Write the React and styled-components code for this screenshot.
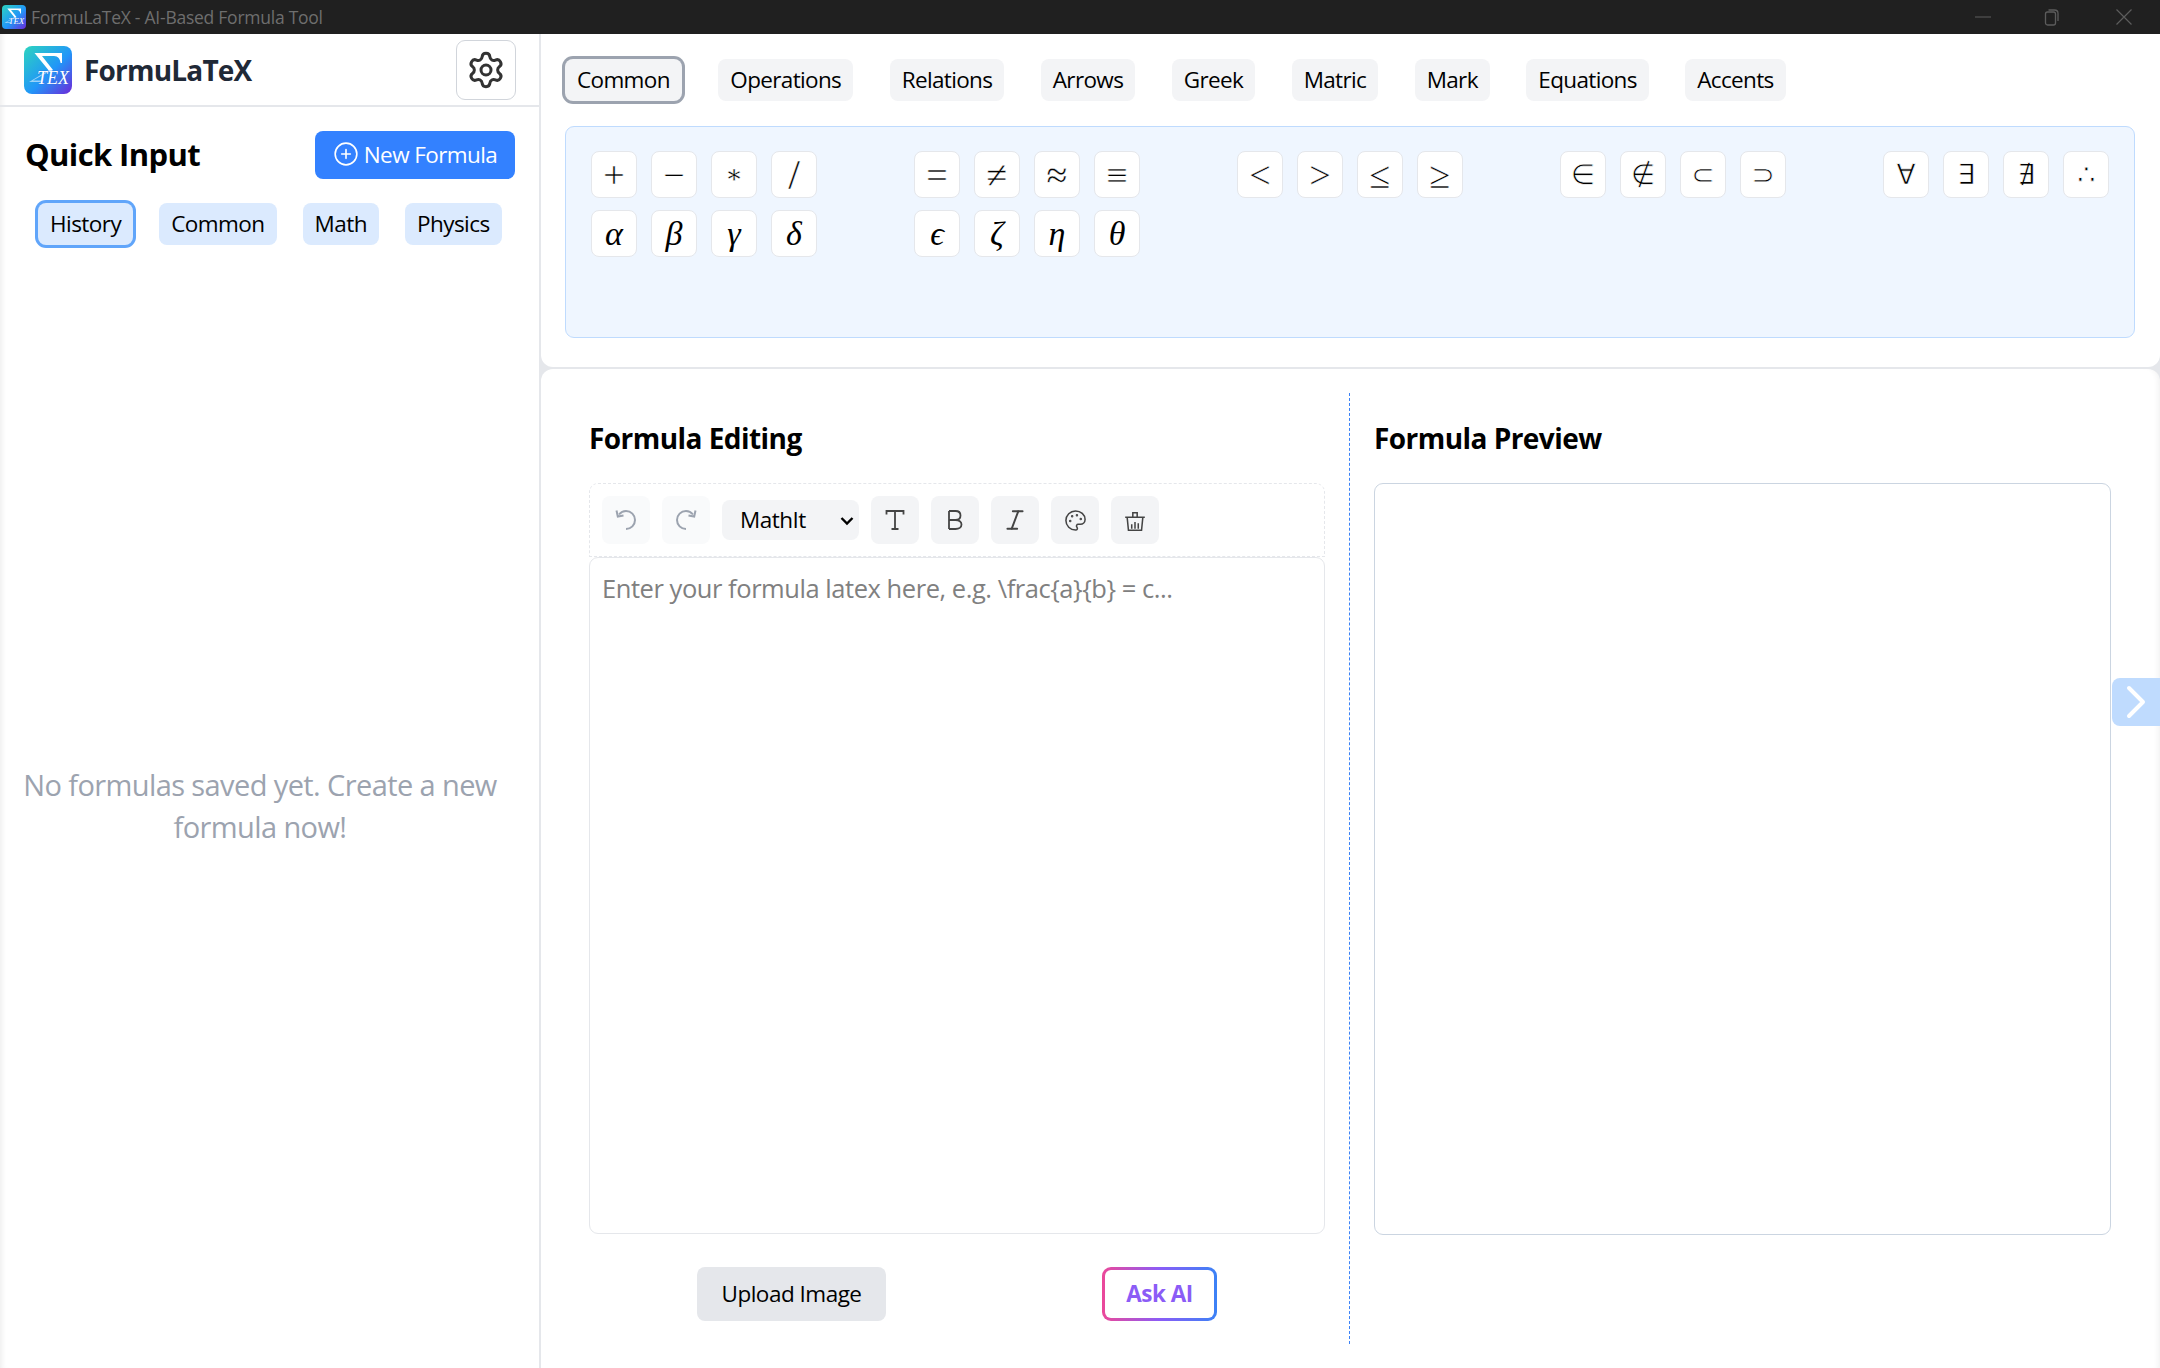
import styled, { createGlobalStyle } from "styled-components";
import { PlusCircle, Settings, Palette, Italic } from "lucide-react";

const GlobalStyle = createGlobalStyle`
  html, body {
    margin: 0;
    padding: 0;
    height: 100%;
    overflow: hidden;
    background: #fff;
    font-family: "Open Sans", "Noto Sans", sans-serif;
  }
  * { box-sizing: border-box; }
`;

const Page = styled.div`
  position: relative;
  width: 2160px;
  height: 1368px;
  display: flex;
  flex-direction: column;
  overflow: hidden;
`;

const TitleBar = styled.div`
  height: 34px;
  flex: none;
  background: #202020;
  display: flex;
  align-items: center;
  padding-left: 2px;
  color: #6e6e6e;
  font-size: 17.5px;
  letter-spacing: -0.25px;
`;
const TitleText = styled.span`
  margin-left: 5px;
  flex: 1;
`;
const WinButton = styled.span`
  width: 72px;
  height: 34px;
  display: flex;
  align-items: center;
  justify-content: center;
  padding-left: ${(p) => p.$nudge || 0}px;
  color: #5c5c5c;
`;

const Body = styled.div`
  flex: 1;
  display: flex;
  min-height: 0;
`;

const Sidebar = styled.aside`
  width: 541px;
  flex: none;
  display: flex;
  flex-direction: column;
  border-right: 2px solid #e5e7eb;
  box-shadow: inset 6px 0 6px -5px rgba(0, 0, 0, 0.09);
`;
const BrandBar = styled.div`
  height: 73px;
  flex: none;
  display: flex;
  align-items: center;
  padding: 0 23px 0 24px;
  border-bottom: 2px solid #e5e7eb;
`;
const BrandName = styled.span`
  margin-left: 12px;
  flex: 1;
  font-size: 28px;
  font-weight: 700;
  letter-spacing: -0.8px;
  color: #1f2937;
`;
const SettingsButton = styled.button`
  width: 60px;
  height: 60px;
  background: #fff;
  border: 1.5px solid #d1d5db;
  border-radius: 9px;
  color: #333;
  display: flex;
  align-items: center;
  justify-content: center;
  padding: 0;
`;

const SidebarPanel = styled.div`
  flex: 1;
  display: flex;
  flex-direction: column;
  padding: 24px 24px 0 25px;
`;
const QuickHead = styled.div`
  display: flex;
  align-items: center;
  justify-content: space-between;
`;
const QuickTitle = styled.h2`
  margin: 0;
  padding-bottom: 2px;
  font-size: 31px;
  font-weight: 700;
  letter-spacing: -0.6px;
  color: #000;
`;
const NewButton = styled.button`
  width: 200px;
  height: 48px;
  border: 0;
  border-radius: 8px;
  background: #3381ff;
  color: #fff;
  font: inherit;
  font-size: 22.5px;
  letter-spacing: -0.6px;
  display: flex;
  align-items: center;
  justify-content: center;
  gap: 5px;
  padding: 0 0 2px;
`;
const SideTabs = styled.div`
  display: flex;
  align-items: center;
  margin: 24px 0 0 13px;
  gap: 26px;
`;
const SideTab = styled.button`
  height: 42px;
  padding: 0 12px 2px;
  border: 0;
  border-radius: 8px;
  background: #dbeafe;
  color: #000;
  font: inherit;
  font-size: 22.5px;
  letter-spacing: -0.55px;
  box-shadow: ${(p) => (p.$active ? "0 0 0 3px #60a5fa" : "none")};
`;
const EmptyNote = styled.p`
  margin: 0 0 0 -20px;
  flex: 1;
  display: flex;
  align-items: center;
  justify-content: center;
  text-align: center;
  font-size: 29px;
  line-height: 42px;
  letter-spacing: -0.6px;
  color: #9ca3af;
  padding: 0 0 2px;
`;

const Main = styled.main`
  flex: 1;
  min-width: 0;
  display: flex;
  flex-direction: column;
  background: #e5e7eb;
  gap: 2px;
`;

const TopPanel = styled.section`
  height: 333px;
  flex: none;
  background: #fff;
  border-radius: 0 0 12px 12px;
  padding: 25px 25px 0 24px;
`;
const CategoryTabs = styled.div`
  display: flex;
  align-items: center;
  height: 42px;
  gap: 36.5px;
`;
const CategoryTab = styled.button`
  height: 42px;
  padding: 0 12px 2px;
  border: 0;
  border-radius: 8px;
  background: #f3f4f6;
  color: #000;
  font: inherit;
  font-size: 22.5px;
  letter-spacing: -0.65px;
  box-shadow: ${(p) => (p.$active ? "0 0 0 3px #9ca3af" : "none")};
`;
const SymbolPanel = styled.div`
  height: 212px;
  margin-top: 25px;
  background: #eff6ff;
  border: 1.5px solid #bfdbfe;
  border-radius: 9px;
  padding: 24px 25px;
  display: grid;
  grid-template-columns: repeat(5, 226px);
  justify-content: space-between;
  align-content: start;
  row-gap: 12px;
`;
const SymbolGroup = styled.div`
  display: grid;
  grid-template-columns: repeat(4, 46px);
  column-gap: 14px;
`;
// the white stroke eats into the glyph, the reference's math font is much lighter
const SymbolButton = styled.button`
  height: 47px;
  padding: 0;
  background: #fff;
  border: 1px solid #e5e7eb;
  border-radius: 8px;
  color: #000;
  font-family: ${(p) =>
    p.$thin ? '"DejaVu Sans", sans-serif' : '"Liberation Serif", "DejaVu Serif", serif'};
  font-size: ${(p) => p.$size || (p.$thin ? 28 : p.$italic ? 34 : 38)}px;
  font-style: ${(p) => (p.$italic ? "italic" : "normal")};
  -webkit-text-stroke: ${(p) => (p.$thin ? 0.7 : p.$italic ? 0 : 0.35)}px #fff;
  line-height: 1;
  display: flex;
  align-items: center;
  justify-content: center;
`;

const BottomPanel = styled.section`
  flex: 1;
  min-height: 0;
  background: #fff;
  border-radius: 12px 12px 0 0;
  padding: 24px 0 24px 46px;
  display: grid;
  grid-template-columns: 763px 1fr;
  box-shadow: inset -6px 0 6px -5px rgba(0, 0, 0, 0.07);
`;
const EditorColumn = styled.div`
  display: flex;
  flex-direction: column;
  padding: 24px 24px 0 2px;
  border-right: 1px dashed #3b82f6;
`;
const PreviewColumn = styled.div`
  display: flex;
  flex-direction: column;
  padding: 24px 49px 0 24px;
`;
const SectionTitle = styled.h3`
  margin: 0 0 24px;
  height: 42px;
  line-height: 42px;
  font-size: 28px;
  font-weight: 700;
  letter-spacing: -0.55px;
  color: #000;
`;
const Toolbar = styled.div`
  height: 74px;
  flex: none;
  border: 1.5px dashed #e5e7eb;
  border-radius: 9px 9px 0 0;
  display: flex;
  align-items: center;
  gap: 12px;
  padding: 0 12px;
`;
const ToolButton = styled.button`
  width: 48px;
  height: 48px;
  padding: 0;
  border: 0;
  border-radius: 8px;
  background: ${(p) => (p.$disabled ? "#f9fafb" : "#f3f4f6")};
  color: ${(p) => (p.$disabled ? "#9ca3af" : "#444")};
  display: flex;
  align-items: center;
  justify-content: center;
`;
const FontSelect = styled.select`
  appearance: none;
  width: 137px;
  height: 40px;
  border: 0;
  border-radius: 8px;
  background-color: #f3f4f6;
  background-image: url("data:image/svg+xml,%3Csvg xmlns='http://www.w3.org/2000/svg' width='14' height='10' viewBox='0 0 14 10' fill='none' stroke='%23000' stroke-width='2.4'%3E%3Cpath d='M1.500 2l5.500 5.500L12.500 2'/%3E%3C/svg%3E");
  background-repeat: no-repeat;
  background-position: 118px 16px;
  color: #000;
  font: inherit;
  font-size: 22.5px;
  letter-spacing: -0.5px;
  padding: 0 8px 2px 18px;
`;
const FormulaInput = styled.textarea`
  width: 100%;
  height: 677px;
  flex: none;
  resize: none;
  border: 1.5px solid #e5e7eb;
  border-radius: 9px;
  padding: 12px;
  outline: none;
  font: inherit;
  font-size: 25.5px;
  letter-spacing: -0.45px;
  line-height: 36px;
  overflow: hidden;
  &::placeholder { color: #808080; }
`;
const ActionRow = styled.div`
  display: flex;
  align-items: center;
  margin-top: 33px;
  padding-left: 108px;
  gap: 216px;
`;
const UploadButton = styled.button`
  width: 189px;
  height: 54px;
  border: 0;
  border-radius: 8px;
  background: #e5e7eb;
  color: #000;
  font: inherit;
  font-size: 22.5px;
  letter-spacing: -0.5px;
  padding: 0 0 2px;
`;
const AskButton = styled.button`
  width: 115px;
  height: 54px;
  border: 3px solid transparent;
  border-radius: 9px;
  background: linear-gradient(#fff, #fff) padding-box,
    linear-gradient(90deg, #ec4899, #8b5cf6, #3b82f6) border-box;
  color: #8b5cf6;
  font: inherit;
  font-size: 22.5px;
  font-weight: 700;
  letter-spacing: -0.5px;
  padding: 0 0 2px;
`;
const PreviewBox = styled.div`
  height: 752px;
  flex: none;
  border: 1.5px solid #cbd5e1;
  border-radius: 9px;
`;
const ExpandTab = styled.button`
  position: absolute;
  right: 0;
  top: 678px;
  width: 48px;
  height: 48px;
  padding: 0;
  border: 0;
  border-radius: 8px 0 0 8px;
  background: #bfdbfe;
  display: flex;
  align-items: center;
  justify-content: center;
`;

const Logo = ({ size, id }) => (
  <svg width={size} height={size} viewBox="0 0 48 48" style={{ flex: "none" }}>
    <defs>
      <linearGradient id={id} x1="0" y1="0" x2="1" y2="1">
        <stop offset="0" stopColor="#2dd4bf" />
        <stop offset="0.55" stopColor="#2196f8" />
        <stop offset="1" stopColor="#6d28d9" />
      </linearGradient>
    </defs>
    <rect width="48" height="48" rx="8" fill={`url(#${id})`} />
    <path d="M10.500 7H38v10h-1.400c-.6-4-2.400-7-6.600-7H18l11 14-3 2z" fill="#fff" />
    <path d="M25 24 5 36h13v-1.500H9l17-9.500z" fill="#fff" opacity="0.55" />
    <text
      x="13"
      y="38"
      fill="#fff"
      fontFamily="'Liberation Serif', serif"
      fontStyle="italic"
      fontSize="18"
      stroke="#2a6fe0"
      strokeWidth="0.5"
      paintOrder="stroke"
    >
      TEX
    </text>
  </svg>
);

const UndoIcon = ({ flip }) => (
  <svg
    width="26"
    height="26"
    viewBox="0 0 26 26"
    fill="none"
    stroke="currentColor"
    strokeWidth="2"
    style={flip ? { transform: "scaleX(-1)" } : undefined}
  >
    <path d="M6 7.500C8 5 10.500 4 13 4c5 0 9 4 9 9s-4 9-9 9" />
    <path d="M3.500 3.500 4.800 9.500 10.500 8.500" strokeLinejoin="miter" />
  </svg>
);

const SerifT = () => (
  <svg width="26" height="26" viewBox="0 0 26 26" fill="none" stroke="currentColor" strokeWidth="1.800">
    <path d="M4.500 7.500V4h17v3.500M13 4v18M9.500 22h7" />
  </svg>
);

const ThinB = () => (
  <svg width="26" height="26" viewBox="0 0 26 26" fill="none" stroke="currentColor" strokeWidth="1.800">
    <path d="M7 4v18M7 4h6.500c3 0 5 1.800 5 4.500S16.500 13 13.500 13H7M13.500 13c3.500 0 6 1.800 6 4.500S17 22 13.500 22H7" />
  </svg>
);

const BasketIcon = () => (
  <svg width="24" height="24" viewBox="0 0 22 22" fill="none" stroke="currentColor" strokeWidth="1.400" style={{ marginTop: 2 }}>
    <path d="M2 7.500h18M9 7V3.500h4V7M3.800 7.500l1.200 12h12l1.200-12" />
    <path d="M8 18v-4M11 18v-6M14 18v-5" />
  </svg>
);

// palette items are [symbol, italic, size override]
const symbolGroups = [
  { items: [["+"], ["−"], ["∗", false, 26], ["/", false, 42]] },
  { items: [["="], ["≠"], ["≈"], ["≡"]] },
  { items: [["<"], [">"], ["≤"], ["≥"]] },
  { thin: true, items: [["∈"], ["∉"], ["⊂"], ["⊃"]] },
  { thin: true, items: [["∀"], ["∃"], ["∄"], ["∴"]] },
  { items: [["α", true], ["β", true], ["γ", true], ["δ", true]] },
  { items: [["ϵ", true], ["ζ", true], ["η", true], ["θ", true]] },
];

const categories = ["Common", "Operations", "Relations", "Arrows", "Greek", "Matric", "Mark", "Equations", "Accents"];
const libraries = ["History", "Common", "Math", "Physics"];

export default function App() {
  return (
    <Page>
      <GlobalStyle />
      <TitleBar>
        <Logo size={24} id="logo-small" />
        <TitleText>FormuLaTeX - AI-Based Formula Tool</TitleText>
        <WinButton $nudge={6}>
          <svg width="16" height="16" viewBox="0 0 16 16" stroke="currentColor" fill="none">
            <path d="M0 8h16" />
          </svg>
        </WinButton>
        <WinButton>
          <svg width="16" height="24" viewBox="0 0 16 24" stroke="currentColor" fill="none" strokeWidth="1.300">
            <rect x="1.500" y="7" width="10" height="13" rx="2" />
            <path d="M4.500 5h6c2 0 3.500 1.500 3.500 3.500V16" />
          </svg>
        </WinButton>
        <WinButton>
          <svg width="16" height="16" viewBox="0 0 16 16" stroke="currentColor" fill="none" strokeWidth="1.200">
            <path d="M0.500 0.500l15 15M15.500 0.500l-15 15" />
          </svg>
        </WinButton>
      </TitleBar>
      <Body>
        <Sidebar>
          <BrandBar>
            <Logo size={48} id="logo-large" />
            <BrandName>FormuLaTeX</BrandName>
            <SettingsButton>
              <Settings size={40} strokeWidth={1.8} />
            </SettingsButton>
          </BrandBar>
          <SidebarPanel>
            <QuickHead>
              <QuickTitle>Quick Input</QuickTitle>
              <NewButton>
                <PlusCircle size={26} strokeWidth={1.5} />
                New Formula
              </NewButton>
            </QuickHead>
            <SideTabs>
              {libraries.map((name, i) => (
                <SideTab key={name} $active={i === 0}>
                  {name}
                </SideTab>
              ))}
            </SideTabs>
            <EmptyNote>
              No formulas saved yet. Create a new
              <br />
              formula now!
            </EmptyNote>
          </SidebarPanel>
        </Sidebar>
        <Main>
          <TopPanel>
            <CategoryTabs>
              {categories.map((name, i) => (
                <CategoryTab key={name} $active={i === 0}>
                  {name}
                </CategoryTab>
              ))}
            </CategoryTabs>
            <SymbolPanel>
              {symbolGroups.map((group, g) => (
                <SymbolGroup key={g}>
                  {group.items.map(([symbol, italic, size]) => (
                    <SymbolButton key={symbol} $italic={italic} $size={size} $thin={group.thin}>
                      {symbol}
                    </SymbolButton>
                  ))}
                </SymbolGroup>
              ))}
            </SymbolPanel>
          </TopPanel>
          <BottomPanel>
            <EditorColumn>
              <SectionTitle>Formula Editing</SectionTitle>
              <Toolbar>
                <ToolButton $disabled>
                  <UndoIcon />
                </ToolButton>
                <ToolButton $disabled>
                  <UndoIcon flip />
                </ToolButton>
                <FontSelect defaultValue="MathIt">
                  <option>MathIt</option>
                  <option>MathRm</option>
                </FontSelect>
                <ToolButton>
                  <SerifT />
                </ToolButton>
                <ToolButton>
                  <ThinB />
                </ToolButton>
                <ToolButton>
                  <Italic size={26} strokeWidth={1.8} />
                </ToolButton>
                <ToolButton>
                  <Palette size={23} strokeWidth={1.6} />
                </ToolButton>
                <ToolButton>
                  <BasketIcon />
                </ToolButton>
              </Toolbar>
              <FormulaInput placeholder="Enter your formula latex here, e.g. \frac{a}{b} = c..." />
              <ActionRow>
                <UploadButton>Upload Image</UploadButton>
                <AskButton>Ask AI</AskButton>
              </ActionRow>
            </EditorColumn>
            <PreviewColumn>
              <SectionTitle>Formula Preview</SectionTitle>
              <PreviewBox />
            </PreviewColumn>
          </BottomPanel>
        </Main>
      </Body>
      <ExpandTab>
        <svg width="24" height="34" viewBox="0 0 24 34" fill="none" stroke="#fff" strokeWidth="4" strokeLinecap="round" strokeLinejoin="round">
          <path d="M5 3l14 14L5 31" />
        </svg>
      </ExpandTab>
    </Page>
  );
}
